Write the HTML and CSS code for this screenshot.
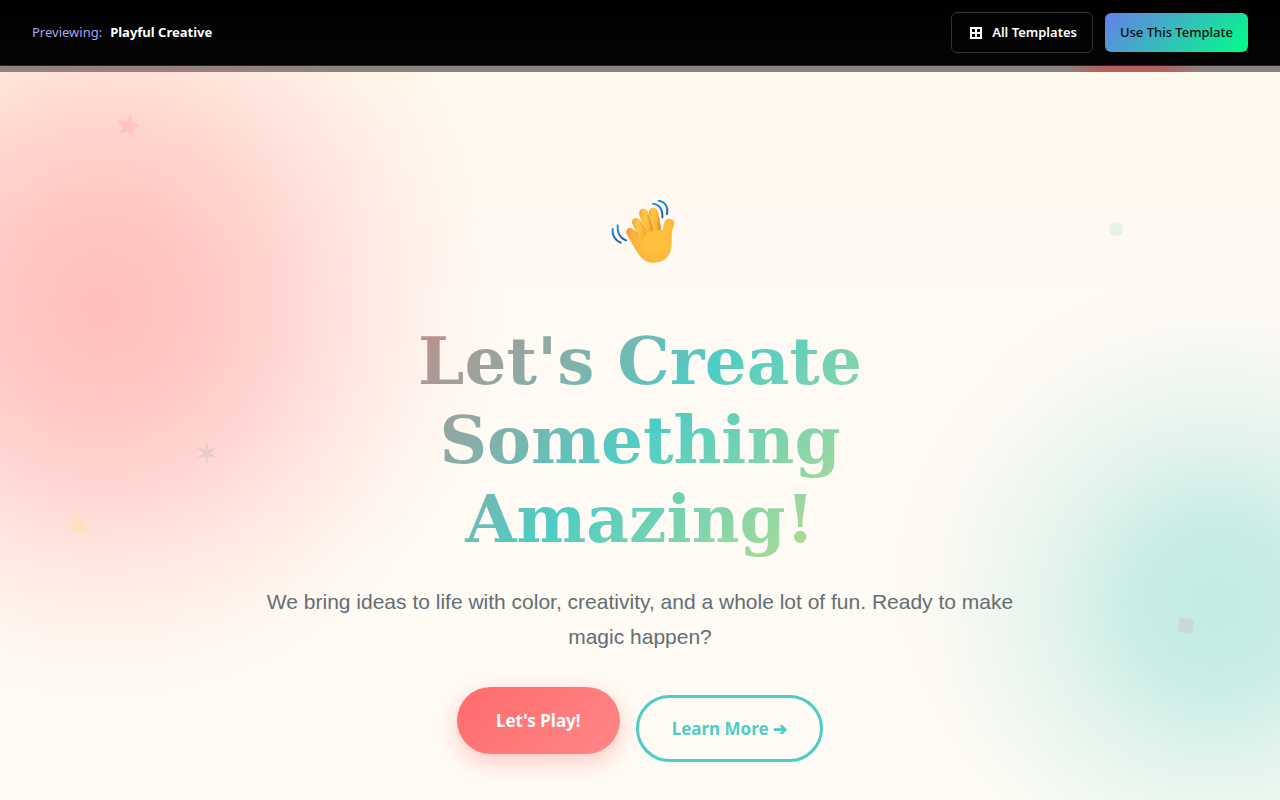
FILE: index.html
```html
<!DOCTYPE html>
<html lang="en">
<head>
    <meta charset="UTF-8">
    <meta name="viewport" content="width=device-width, initial-scale=1.0">
    <title>Playful Creative</title>
    <link rel="stylesheet" href="styles.css">
</head>
<body>
    <header class="preview-bar">
        <div class="preview-info">
            <span class="preview-label">Previewing:</span>
            <strong class="preview-name">Playful Creative</strong>
        </div>
        <nav class="preview-actions">
            <a href="#" class="btn-outline">
                <svg class="grid-icon" viewBox="0 0 12 12" aria-hidden="true">
                    <path fill="#fff" fill-rule="evenodd" d="M0 0h12v12H0zM2 2v3h3V2zM7 2v3h3V2zM2 7v3h3V7zM7 7v3h3V7z"/>
                    <path fill="#fff" d="M5 5h2v2H5z"/>
                </svg>
                All Templates
            </a>
            <a href="#" class="btn-use">Use This Template</a>
        </nav>
    </header>
    <div class="nav-strip"></div>

    <main class="hero">
        <div class="shapes" aria-hidden="true">
            <svg class="shape star" viewBox="0 0 24 24"><path fill="#ff6b6b" d="M15 0 16.2 8.6 24 10.9 17 14.6 17.4 23 11.4 17.6 2.5 20.4 7 12.8 1 5.2 9.8 7.6z"/></svg>
            <svg class="shape dot" viewBox="0 0 24 24"><circle cx="12" cy="12" r="7" fill="#4ecdc4"/></svg>
            <svg class="shape triangle" viewBox="0 0 24 24"><path fill="#ffe66d" d="M10.5 1 22.5 22 1 23z"/></svg>
            <svg class="shape square" viewBox="0 0 24 24"><path fill="#d49a9f" d="M5.5 4 20.4 6.5 18 21 3.5 18.5z"/></svg>
            <svg class="shape spark" viewBox="0 0 24 24"><path fill="#95b8b0" d="M12 0 13.7 8.6 22 6 15.4 12 22 17.5 13.7 15.2 12.2 24 10.3 15.2 2 17.7 8.5 12 2 6.4 10.3 8.6z"/></svg>
        </div>

        <svg class="wave" viewBox="60 54 198 198" role="img" aria-label="Waving hand">
            <defs>
                <radialGradient id="palm" gradientUnits="userSpaceOnUse" cx="205" cy="175" r="105">
                    <stop offset="0" stop-color="#ffc23e"/>
                    <stop offset="0.65" stop-color="#fdb83c"/>
                    <stop offset="0.88" stop-color="#f5a33f"/>
                    <stop offset="1" stop-color="#f08a5a"/>
                </radialGradient>
                <linearGradient id="finger" x1="0" y1="0" x2="1" y2="0.2">
                    <stop offset="0" stop-color="#f3a530"/>
                    <stop offset="0.4" stop-color="#ffc848"/>
                    <stop offset="0.75" stop-color="#fab735"/>
                    <stop offset="1" stop-color="#e09a2e"/>
                </linearGradient>
                <linearGradient id="motion" x1="0" y1="0" x2="0" y2="1">
                    <stop offset="0" stop-color="#2492dc"/>
                    <stop offset="1" stop-color="#185c9f"/>
                </linearGradient>
            </defs>
            <path fill="url(#palm)" d="M110 151C114 142 125 142 131 150L146 165 176 132 212 148 218 152 222 130C224 116 238 113 247 119 254 124 255 132 250 142 244 156 245 171 245 190 245 229 222 249 189 248 163 248 149 229 138 211L113 168C109 161 107 157 110 151Z"/>
            <path fill="url(#finger)" d="M127 131C123 120 133 111 143 115 149 117 151 123 154 128L176 165 160 188 142 164Z"/>
            <path fill="url(#finger)" d="M148 105C146 90 156 85 164 87 171 88 174 95 176 102L192 150 182 172 165 155Z"/>
            <path fill="url(#finger)" d="M177 103C174 91 182 82 192 83 201 84 204 92 206 103L212 148C210 164 196 164 190 150Z"/>
            <path fill="#ffc03e" d="M156 190C158 168 172 155 190 152 206 148 216 154 224 150L238 199C211 218 170 214 156 190Z"/>
            <path fill="none" stroke="#c9812b" stroke-width="3" stroke-linecap="round" opacity=".6" d="M150 124 168 152M174 106 188 146M206 112 213 146M134 152 144 166"/>
            <g fill="none" stroke="url(#motion)" stroke-width="6" stroke-linecap="round">
                <path d="M68 147C66 164 74 181 92 188"/>
                <path d="M83 136C81 158 91 175 108 181"/>
                <path d="M189 71C207 72 219 88 217 112"/>
                <path d="M206 62C224 64 235 80 231 102"/>
            </g>
        </svg>

        <h1 class="hero-title">Let's Create<br>Something<br>Amazing!</h1>
        <p class="hero-text">We bring ideas to life with color, creativity, and a whole lot of fun. Ready to make magic happen?</p>
        <div class="hero-buttons">
            <button type="button" class="btn btn-primary">Let's Play!</button>
            <button type="button" class="btn btn-secondary">Learn More ➔</button>
        </div>
    </main>
</body>
</html>
```

FILE: styles.css
```css
* {
    box-sizing: border-box;
    margin: 0;
    padding: 0;
}
body {
    min-height: 100vh;
    display: flex;
    flex-direction: column;
    font-family: "Liberation Sans", Arial, sans-serif;
    background: #fffcf5;
    overflow-x: hidden;
}

/* Preview bar */
.preview-bar {
    display: flex;
    justify-content: space-between;
    align-items: center;
    padding: 12px 32px;
    background: linear-gradient(#000, #040504);
    border-bottom: 1px solid #242321;
    font-family: "Segoe UI", "Noto Sans", sans-serif;
    font-size: 13px;
    line-height: 19px;
}
.preview-info {
    display: flex;
    gap: 8px;
}
.preview-label {
    color: #a8a4ec;
}
.preview-name {
    color: #fff;
}
.preview-actions {
    display: flex;
    align-items: center;
    gap: 12px;
}
.preview-actions a {
    display: flex;
    align-items: center;
    padding: 10px 15px;
    border-radius: 6px;
    text-decoration: none;
}
.preview-actions .btn-outline {
    gap: 10px;
    padding: 10px 15px 10px 18px;
    border: 1px solid #333;
    color: #fff;
    font-weight: 600;
}
.grid-icon {
    width: 12px;
    height: 12px;
}
.btn-use {
    background: linear-gradient(135deg, #667eea, #00ff88);
    color: #0a0a0a;
    font-weight: 500;
}
.nav-strip {
    height: 6px;
    background:
        radial-gradient(ellipse 70px 30px at 88.5% 50%, #b65f60 40%, transparent),
        radial-gradient(ellipse 240px 60px at 12% 50%, #9a7f7b, transparent),
        #89847e;
}

/* Hero */
.hero {
    position: relative;
    flex: 1;
    display: flex;
    flex-direction: column;
    align-items: center;
    padding: 126px 24px 38px;
    text-align: center;
    background:
        radial-gradient(circle 400px at 8% 236px, rgba(255, 107, 107, 0.41), rgba(255, 107, 107, 0.35) 25%, rgba(255, 107, 107, 0.25) 45%, rgba(255, 107, 107, 0.13) 65%, rgba(255, 107, 107, 0.04) 85%, transparent),
        radial-gradient(circle 335px at 95% 532px, rgba(78, 205, 196, 0.35), rgba(78, 205, 196, 0.3) 25%, rgba(78, 205, 196, 0.18) 45%, rgba(78, 205, 196, 0.09) 65%, rgba(78, 205, 196, 0.02) 85%, transparent),
        linear-gradient(#fff8ec, #fffaf4 30%, #fffcf5);
}
.shape {
    position: absolute;
    width: 24px;
    height: 24px;
    opacity: 0.15;
}
.star {
    top: 42px;
    left: 9.1%;
}
.dot {
    top: 145px;
    right: 11.9%;
}
.triangle {
    top: 437px;
    left: 5.2%;
    opacity: 0.2;
}
.square {
    top: 541px;
    right: 6.4%;
    opacity: 0.2;
}
.spark {
    top: 369px;
    left: 15.2%;
    opacity: 0.25;
}
.wave {
    width: 66px;
    height: 66px;
    margin-bottom: 58px;
    margin-left: 6px;
}
.hero-title {
    width: 100%;
    max-width: 800px;
    margin-bottom: 25px;
    font-family: Georgia, "DejaVu Serif", serif;
    font-size: 66px;
    line-height: 79px;
    font-weight: bold;
    background: linear-gradient(135deg, #ff6b6b, #4ecdc4, #ffe66d);
    background-clip: text;
    -webkit-background-clip: text;
    color: transparent;
}
.hero-text {
    max-width: 760px;
    margin-bottom: 33px;
    font-size: 21px;
    line-height: 35px;
    color: #636e72;
}
.hero-buttons {
    display: flex;
    align-items: flex-end;
    gap: 16px;
}
.btn {
    border: none;
    border-radius: 50px;
    font-family: "Segoe UI", "Noto Sans", sans-serif;
    font-size: 17px;
    line-height: 27px;
    font-weight: 700;
    cursor: pointer;
}
.btn-primary {
    margin-bottom: 8px;
    padding: 20px 39px;
    background: linear-gradient(135deg, #ff6b6b, #ff8787);
    box-shadow: 0 8px 25px rgba(255, 107, 107, 0.35);
    color: #fff;
}
.btn-secondary {
    padding: 17px 33px;
    border: 3px solid #4ecdc4;
    background: transparent;
    color: #4ecdc4;
}
```
